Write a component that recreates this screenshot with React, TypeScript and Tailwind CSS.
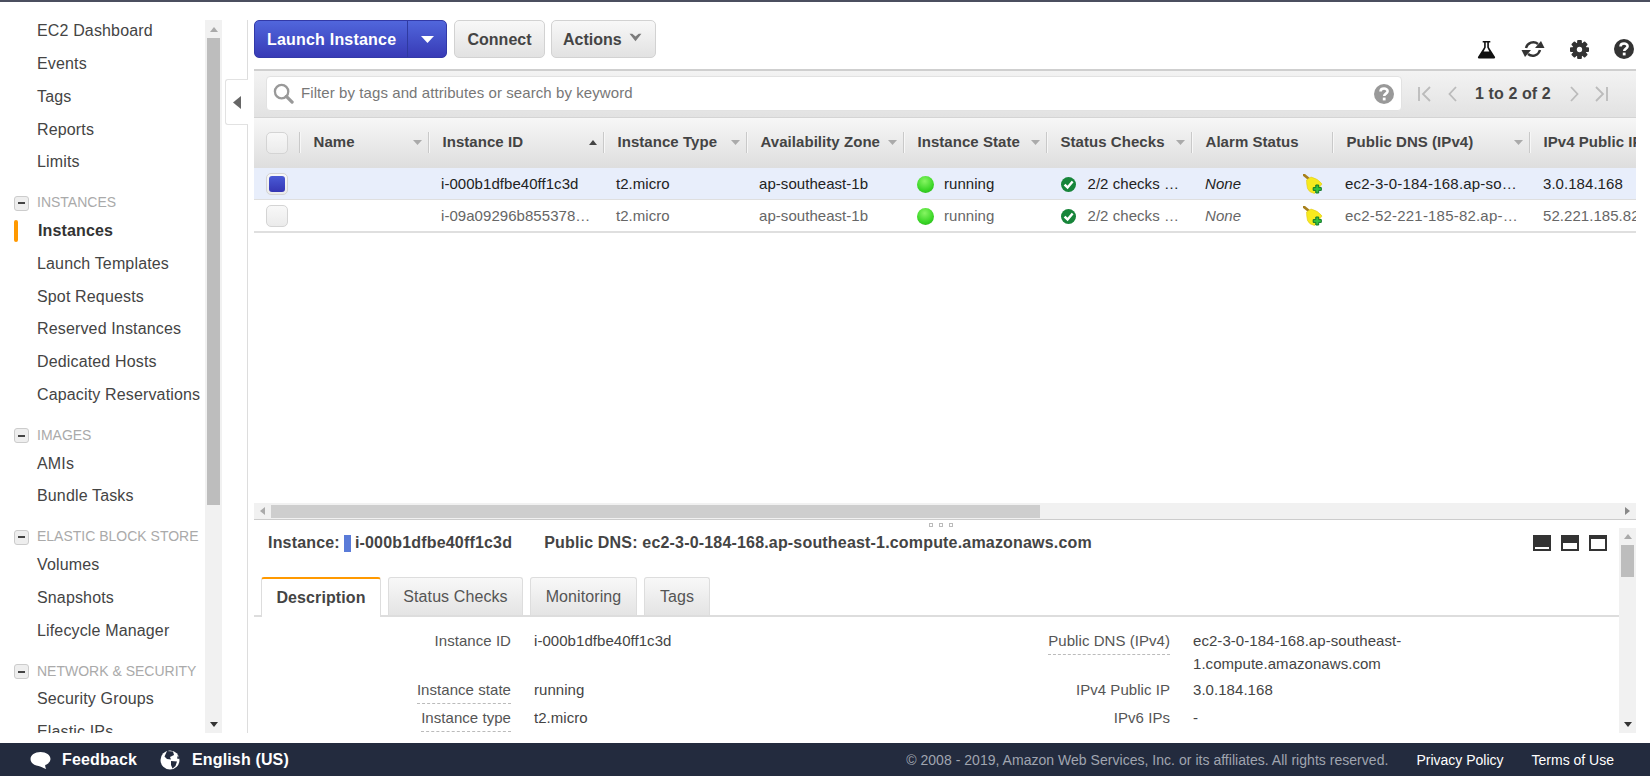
import React from "react";

const Tri = ({ dir, className }: { dir: "up" | "down" | "left" | "right"; className?: string }) => {
  const p = { up: "0,8 5,0 10,8", down: "0,0 10,0 5,8", left: "8,0 8,10 0,5", right: "0,0 0,10 8,5" }[dir];
  const vb = dir === "left" || dir === "right" ? "0 0 8 10" : "0 0 10 8";
  return (
    <svg viewBox={vb} className={className} fill="currentColor" preserveAspectRatio="none">
      <polygon points={p} />
    </svg>
  );
};

const NavItem = ({ label, active }: { label: string; active?: boolean }) => (
  <div className="h-[32.75px] flex items-center relative pl-[37px] text-[16px] tracking-[0.15px] text-[#444] whitespace-nowrap">
    {active && <span className="absolute left-[14px] top-[5px] w-[4px] h-[22px] rounded-[2px] bg-[#f90]" />}
    {active ? <span className="font-bold text-[#333] pl-[1px]">{label}</span> : label}
  </div>
);

const NavHead = ({ label }: { label: string }) => (
  <div className="mt-[12px] h-[24px] flex items-center relative pl-[37px] text-[14px] text-[#aaa] whitespace-nowrap">
    <span className="absolute left-[14px] top-[5px] w-[15px] h-[15px] rounded-[3px] border border-[#ccc] bg-[#eee] flex items-center justify-center">
      <span className="block w-[7px] h-[2px] bg-[#444]" />
    </span>
    {label}
  </div>
);

const Check = ({ on }: { on?: boolean }) => (
  <div className="w-[22px] h-[22px] rounded-[5px] border border-[#d4d4d4] bg-gradient-to-b from-[#f8f8f8] to-[#ebebeb] flex items-center justify-center">
    {on && <span className="block w-[16px] h-[16px] rounded-[3px] bg-gradient-to-b from-[#4a5ad6] to-[#3636b4]" />}
  </div>
);

const Sep = () => <span className="absolute right-0 top-[13px] h-[21px] w-[2px] border-l border-[#c9c9c9] bg-[#f7f7f7]" />;

const Head = ({ label, sort = "down" }: { label: string; sort?: "up" | "down" | "none" }) => (
  <div className="relative flex items-center pb-[2px] pl-[12.5px] pr-[8px] text-[15px] tracking-[0.05px] font-bold text-[#444] whitespace-nowrap overflow-hidden">
    <span className="flex-1">{label}</span>
    {sort === "down" && <Tri dir="down" className="w-[9px] h-[5px] text-[#aaa] shrink-0" />}
    {sort === "up" && <Tri dir="up" className="w-[8px] h-[5px] text-[#444] shrink-0" />}
    <Sep />
  </div>
);

const Dot = () => (
  <span className="block w-[17px] h-[17px] rounded-full bg-[radial-gradient(circle_at_45%_30%,#86f562,#3ad626_60%,#23a818)] shrink-0" />
);

const Ok = () => (
  <svg viewBox="0 0 16 16" className="w-[15px] h-[15px] shrink-0">
    <circle cx="8" cy="8" r="8" fill="#17853a" />
    <path d="M3.8 8.2 L7 11.2 L12.4 4.8" fill="none" stroke="#fff" strokeWidth="2.6" />
  </svg>
);

const Broom = () => (
  <svg viewBox="0 0 20 20" className="w-[20px] h-[20px] shrink-0 translate-x-[1px]">
    <path d="M1 1 L6 5" stroke="#a8801c" strokeWidth="2.8" strokeLinecap="round" />
    <path d="M3.5 6 L8 3 Q15 4.5 19 10 L11.5 19.5 Q6 18.5 4.5 14.5 Q3.5 10 3.5 6 Z" fill="#f7ea1e" stroke="#e0c818" strokeWidth="0.6" />
    <path d="M12.8 11 H15.7 V13.6 H18.3 V16.4 H15.7 V19 H12.8 V16.4 H10.2 V13.6 H12.8 Z" fill="#35c23e" stroke="#11772a" strokeWidth="1" />
  </svg>
);

const COLS = "grid-cols-[47px_129px_175px_143px_157px_143px_145px_141px_197px_200px]";

const Row = ({ on, id, dns, ip }: { on?: boolean; id: string; dns: string; ip: string }) => (
  <div className={`grid ${COLS} items-center text-[15px] tracking-[0.05px] border-b border-[#dfdfdf] whitespace-nowrap ${on ? "h-[32px] bg-[#e8eefb] text-[#222] pt-[1px]" : "h-[33px] bg-white text-[#666] border-b-2 pt-[1px]"}`}>
    <div className="pl-[12px]"><Check on={on} /></div>
    <div />
    <div className="pl-[11px]">{id}</div>
    <div className="pl-[11px]">t2.micro</div>
    <div className="pl-[11px]">ap-southeast-1b</div>
    <div className="pl-[12px] flex items-center gap-[10px]"><Dot />running</div>
    <div className="pl-[13px] flex items-center gap-[11.5px]"><Ok />2/2 checks …</div>
    <div className="pl-[12px] pr-[12px] flex items-center justify-between italic"><span>None</span><Broom /></div>
    <div className="pl-[11px] tracking-[0.2px]">{dns}</div>
    <div className="pl-[12px]">{ip}</div>
  </div>
);

const Tab = ({ label, on }: { label: string; on?: boolean }) => (
  <div className={`flex items-center justify-center text-[16px] tracking-[0.1px] rounded-t-[3px] ${on ? "w-[120px] h-[40px] pb-[1px] bg-white font-bold text-[#444] border-t-[2px] border-t-[#f90] border-x border-x-[#ddd] -mb-[2px]" : "h-[38px] bg-gradient-to-b from-[#f8f8f8] to-[#e4e4e4] border border-[#ddd] border-b-0 text-[#555]"}`}>
    {label}
  </div>
);

const Label = ({ children, dashed }: { children: React.ReactNode; dashed?: boolean }) => (
  <div className="text-right text-[15px] text-[#555] leading-[23px]">
    <span className={`inline-block ${dashed ? "border-b border-dashed border-[#bbb] pb-[2px]" : ""}`}>{children}</span>
  </div>
);

const Panel = ({ kind }: { kind: 1 | 2 | 3 }) => (
  <svg viewBox="0 0 18 16" className="w-[18px] h-[16px]">
    <rect width="18" height="16" fill="#333" />
    {kind === 1 && <rect x="2" y="12" width="14" height="2" fill="#fff" />}
    {kind === 2 && <rect x="2" y="8" width="14" height="6" fill="#fff" />}
    {kind === 3 && <rect x="2" y="4" width="14" height="10" fill="#fff" />}
  </svg>
);

export default function App() {
  return (
    <div className="w-[1650px] h-[776px] overflow-hidden flex flex-col bg-white border-t-2 border-[#4b4f5f] font-['Liberation_Sans',Arial,sans-serif]">
      <div className="h-[741px] flex pb-[10px]">
        {/* sidebar */}
        <aside className="w-[222px] flex shrink-0">
          <nav className="w-[205px] overflow-hidden pt-[13px]">
            {["EC2 Dashboard", "Events", "Tags", "Reports", "Limits"].map((l) => <NavItem key={l} label={l} />)}
            <NavHead label="INSTANCES" />
            <NavItem label="Instances" active />
            {["Launch Templates", "Spot Requests", "Reserved Instances", "Dedicated Hosts", "Capacity Reservations"].map((l) => <NavItem key={l} label={l} />)}
            <NavHead label="IMAGES" />
            {["AMIs", "Bundle Tasks"].map((l) => <NavItem key={l} label={l} />)}
            <NavHead label="ELASTIC BLOCK STORE" />
            {["Volumes", "Snapshots", "Lifecycle Manager"].map((l) => <NavItem key={l} label={l} />)}
            <NavHead label="NETWORK & SECURITY" />
            {["Security Groups", "Elastic IPs"].map((l) => <NavItem key={l} label={l} />)}
          </nav>
          <div className="w-[17px] mt-[18px] bg-[#f1f1f1] flex flex-col items-center">
            <div className="h-[18px] flex items-center justify-center"><Tri dir="up" className="w-[8px] h-[5px] text-[#aaa]" /></div>
            <div className="w-[13px] h-[467px] bg-[#bdbdbd]" />
            <div className="flex-1" />
            <div className="h-[18px] flex items-center justify-center"><Tri dir="down" className="w-[8px] h-[5px] text-[#333]" /></div>
          </div>
        </aside>

        {/* main */}
        <main className="relative ml-[25px] mt-[18px] w-[1403px] border-l border-[#ddd] pl-[6px] pr-[14px] flex flex-col">
          <div className="absolute -left-[23px] top-[59px] w-[23px] h-[46px] bg-white border border-r-0 border-[#e2e2e2] rounded-l-[3px] flex items-center justify-center">
            <Tri dir="left" className="w-[8px] h-[13px] text-[#666]" />
          </div>

          {/* toolbar */}
          <div className="h-[38px] flex relative shrink-0">
            <div className="w-[193px] h-[38px] rounded-[5px] border border-[#3239a8] bg-gradient-to-b from-[#5166dc] to-[#383ab6] flex text-white font-bold text-[16px] tracking-[0.2px]">
              <div className="w-[153px] flex items-center pl-[12px] pt-[1px] border-r border-[#2f3aa0]">Launch Instance</div>
              <div className="flex-1 flex items-center justify-center"><Tri dir="down" className="w-[13px] h-[7px] text-white" /></div>
            </div>
            <div className="ml-[7px] w-[91px] h-[38px] pt-[1px] rounded-[5px] border border-[#d2d2d2] bg-gradient-to-b from-[#f8f8f8] to-[#e2e2e2] flex items-center justify-center font-bold text-[16px] text-[#444]">Connect</div>
            <div className="ml-[6px] w-[105px] h-[38px] pt-[1px] rounded-[5px] border border-[#d2d2d2] bg-gradient-to-b from-[#f8f8f8] to-[#e2e2e2] flex items-center pl-[11px] gap-[7px] font-bold text-[16px] text-[#444]">
              Actions
              <svg viewBox="0 0 12 8" className="w-[13px] h-[9px] -mt-[5px]"><path d="M0.5 0.5 H3 L6 3 L9 0.5 H11.5 L6 7.5 Z" fill="#7c7c7c" /></svg>
            </div>
            <div className="ml-auto flex items-center gap-[25px] self-end -mb-[1px] h-[20px] pr-[2px]">
              <svg viewBox="0 0 20 20" className="w-[19px] h-[19px]"><path d="M6 1 H14 V2.5 H12.5 V7.5 L19 18 Q19.5 19.5 18 19.5 H2 Q0.5 19.5 1 18 L7.5 7.5 V2.5 H6 Z M9.2 2.5 V8 L7 12 H13 L10.8 8 V2.5 Z" fill="#111" fillRule="evenodd" /></svg>
              <svg viewBox="0 0 24 20" className="w-[24px] h-[20px]"><g fill="none" stroke="#333" strokeWidth="2.4"><path d="M5 9 A7.5 7.5 0 0 1 17 5" /><path d="M19 11 A7.5 7.5 0 0 1 7 15" /></g><polygon points="14,9 23.5,9 20,2" fill="#333" /><polygon points="0.5,11 10,11 4,18" fill="#333" /></svg>
              <svg viewBox="0 0 20 20" className="w-[19px] h-[19px]">
                <g fill="#333">
                  <rect x="7.5" y="0" width="5" height="20" rx="1" />
                  <rect x="7.5" y="0" width="5" height="20" rx="1" transform="rotate(45 10 10)" />
                  <rect x="7.5" y="0" width="5" height="20" rx="1" transform="rotate(90 10 10)" />
                  <rect x="7.5" y="0" width="5" height="20" rx="1" transform="rotate(135 10 10)" />
                  <circle cx="10" cy="10" r="7.5" />
                </g>
                <circle cx="10" cy="10" r="2.8" fill="#fff" />
              </svg>
              <svg viewBox="0 0 20 20" className="w-[20px] h-[20px]"><circle cx="10" cy="10" r="10" fill="#333" /><path d="M6.5 7.5 C6.5 3.6 13.6 3.6 13.6 7.3 C13.6 9.6 10.2 9.6 10.2 12" fill="none" stroke="#fff" strokeWidth="2.6" /><rect x="8.8" y="13.6" width="2.8" height="2.8" fill="#fff" /></svg>
            </div>
          </div>

          {/* filter */}
          <div className="mt-[11px] h-[49px] shrink-0 border-t-2 border-[#cfcfcf] bg-gradient-to-b from-[#f3f3f3] to-[#e2e2e2] border-b border-b-[#d4d4d4] flex items-center pl-[12px]">
            <div className="w-[1136px] h-[35px] -mt-[1px] rounded-[4px] bg-white border border-[#e2e2e2] flex items-center pl-[6px] pr-[7px] text-[15px] tracking-[0.08px] text-[#777]">
              <svg viewBox="0 0 22 22" className="w-[21px] h-[21px] mr-[7px]"><circle cx="9" cy="9" r="7" fill="none" stroke="#999" strokeWidth="2.4" /><path d="M14 14 L20 20" stroke="#999" strokeWidth="3.4" strokeLinecap="round" /></svg>
              <span className="flex-1">Filter by tags and attributes or search by keyword</span>
              <svg viewBox="0 0 20 20" className="w-[20px] h-[20px]"><circle cx="10" cy="10" r="10" fill="#999" /><path d="M6.5 7.5 C6.5 3.6 13.6 3.6 13.6 7.3 C13.6 9.6 10.2 9.6 10.2 12" fill="none" stroke="#fff" strokeWidth="2.6" /><rect x="8.8" y="13.6" width="2.8" height="2.8" fill="#fff" /></svg>
            </div>
            <svg viewBox="0 0 13 16" className="w-[13px] h-[16px] ml-[16px]"><path d="M1 1 V15 M12 1 L5 8 L12 15" fill="none" stroke="#bbb" strokeWidth="1.8" /></svg>
            <svg viewBox="0 0 9 16" className="w-[9px] h-[16px] ml-[17px]"><path d="M8 1 L1.5 8 L8 15" fill="none" stroke="#bbb" strokeWidth="1.8" /></svg>
            <span className="ml-[18px] text-[16px] tracking-[0.1px] font-bold text-[#444] whitespace-nowrap">1 to 2 of 2</span>
            <svg viewBox="0 0 9 16" className="w-[9px] h-[16px] ml-[19px]"><path d="M1 1 L7.5 8 L1 15" fill="none" stroke="#bbb" strokeWidth="1.8" /></svg>
            <svg viewBox="0 0 13 16" className="w-[13px] h-[16px] ml-[16px]"><path d="M12 1 V15 M1 1 L8 8 L1 15" fill="none" stroke="#bbb" strokeWidth="1.8" /></svg>
          </div>

          {/* table */}
          <div className="h-[385px] shrink-0 overflow-hidden bg-white">
            <div className="w-[1480px]">
              <div className={`grid ${COLS} h-[50px] border-t border-[#f7f7f7] bg-gradient-to-b from-[#f6f6f6] to-[#dedede]`}>
                <div className="relative pl-[12px] flex items-center pb-[2px]"><Check /><Sep /></div>
                <Head label="Name" />
                <Head label="Instance ID" sort="up" />
                <Head label="Instance Type" />
                <Head label="Availability Zone" />
                <Head label="Instance State" />
                <Head label="Status Checks" />
                <Head label="Alarm Status" sort="none" />
                <Head label="Public DNS (IPv4)" />
                <Head label="IPv4 Public IP" sort="none" />
              </div>
              <Row on id="i-000b1dfbe40ff1c3d" dns="ec2-3-0-184-168.ap-so…" ip="3.0.184.168" />
              <Row id="i-09a09296b855378…" dns="ec2-52-221-185-82.ap-…" ip="52.221.185.82" />
            </div>
          </div>

          {/* h scrollbar */}
          <div className="h-[17px] shrink-0 bg-[#f1f1f1] border-b border-[#ccc] flex items-start">
            <div className="w-[17px] h-[16px] flex items-center justify-center"><Tri dir="left" className="w-[5px] h-[8px] text-[#aaa]" /></div>
            <div className="w-[769px] h-[13px] mt-[2px] bg-[#cecece]" />
            <div className="flex-1" />
            <div className="w-[17px] h-[16px] flex items-center justify-center"><Tri dir="right" className="w-[5px] h-[8px] text-[#888]" /></div>
          </div>

          {/* detail */}
          <div className="flex-1 min-h-0 flex relative">
            <div className="absolute left-[675px] top-[3px] flex gap-[6px]">
              <span className="w-[4px] h-[4px] border border-[#bbb]" /><span className="w-[4px] h-[4px] border border-[#bbb]" /><span className="w-[4px] h-[4px] border border-[#bbb]" />
            </div>
            <div className="w-[1365px] overflow-hidden">
              <div className="h-[58px] flex pt-[14px] text-[16px] tracking-[0.18px] font-bold text-[#444] relative whitespace-nowrap pl-[14px]">
                <span className="h-[18px] flex items-center">Instance:</span>
                <span className="ml-[4px] mt-[1px] w-[7px] h-[17px] bg-[#5a7bd8]" />
                <span className="ml-[4px] h-[18px] flex items-center">i-000b1dfbe40ff1c3d</span>
                <span className="ml-[32px] h-[18px] flex items-center">Public DNS: ec2-3-0-184-168.ap-southeast-1.compute.amazonaws.com</span>
                <div className="ml-auto flex gap-[10px] pt-[1px] pr-[12px]"><Panel kind={1} /><Panel kind={2} /><Panel kind={3} /></div>
              </div>
              <div className="h-[39px] flex items-end gap-[7px] pl-[7px] border-b-2 border-[#ddd]">
                <Tab label="Description" on />
                <div className="w-[135px]"><Tab label="Status Checks" /></div>
                <div className="w-[107px]"><Tab label="Monitoring" /></div>
                <div className="w-[66px]"><Tab label="Tags" /></div>
              </div>
              <div className="grid grid-cols-[257px_423px_236px_1fr] grid-rows-[49px_28px_27px] pt-[12px] tracking-[0.05px]">
                <Label>Instance ID</Label>
                <div className="pl-[23px] text-[15px] text-[#444] leading-[23px]">i-000b1dfbe40ff1c3d</div>
                <Label dashed>Public DNS (IPv4)</Label>
                <div className="pl-[23px] text-[15px] text-[#444] leading-[23px] w-[240px] break-words">ec2-3-0-184-168.ap-southeast-<br />1.compute.amazonaws.com</div>
                <Label dashed>Instance state</Label>
                <div className="pl-[23px] text-[15px] text-[#444] leading-[23px]">running</div>
                <Label>IPv4 Public IP</Label>
                <div className="pl-[23px] text-[15px] text-[#444] leading-[23px]">3.0.184.168</div>
                <Label dashed>Instance type</Label>
                <div className="pl-[23px] text-[15px] text-[#444] leading-[23px]">t2.micro</div>
                <Label>IPv6 IPs</Label>
                <div className="pl-[23px] text-[15px] text-[#444] leading-[23px]">-</div>
              </div>
            </div>
            <div className="w-[17px] mt-[8px] bg-[#f1f1f1] flex flex-col items-center">
              <div className="h-[17px] flex items-center justify-center"><Tri dir="up" className="w-[8px] h-[5px] text-[#aaa]" /></div>
              <div className="w-[13px] h-[32px] bg-[#bdbdbd]" />
              <div className="flex-1" />
              <div className="h-[17px] flex items-center justify-center"><Tri dir="down" className="w-[8px] h-[5px] text-[#333]" /></div>
            </div>
          </div>
        </main>
      </div>

      {/* footer */}
      <footer className="h-[33px] shrink-0 bg-[#232b3e] flex items-center pl-[30px] pr-[36px] text-white whitespace-nowrap pt-[1px]">
        <svg viewBox="0 0 22 20" className="w-[21px] h-[19px]"><path d="M11 1 C5 1 0.5 4 0.5 8.5 C0.5 12.5 4.5 15.5 9 15.8 C11 16 14 18 17 19 C16 17.5 15.8 16 16 14.8 C19.5 13.4 21.5 11 21.5 8.5 C21.5 4 17 1 11 1 Z" fill="#fff" /></svg>
        <span className="ml-[11px] font-bold text-[16px] tracking-[0.15px]">Feedback</span>
        <svg viewBox="0 0 20 20" className="w-[20px] h-[20px] ml-[23px]"><circle cx="10" cy="10" r="9.5" fill="#fff" /><path d="M7 1 L13 1.5 L14 5 L10 7 L11 9.5 L7 9 L4.5 6.5 Z M11 11 L17 11.5 L15.5 16 L12.5 18.5 L11 15 Z M18 5 L19.5 9 L17 8.5 Z" fill="#232b3e" /></svg>
        <span className="ml-[12px] font-bold text-[16px] tracking-[0.15px]">English (US)</span>
        <span className="ml-auto text-[14px] tracking-[0.03px] text-[#a0a5b0]">© 2008 - 2019, Amazon Web Services, Inc. or its affiliates. All rights reserved.</span>
        <span className="ml-[28px] text-[14px]">Privacy Policy</span>
        <span className="ml-[28px] text-[14px]">Terms of Use</span>
      </footer>
    </div>
  );
}
